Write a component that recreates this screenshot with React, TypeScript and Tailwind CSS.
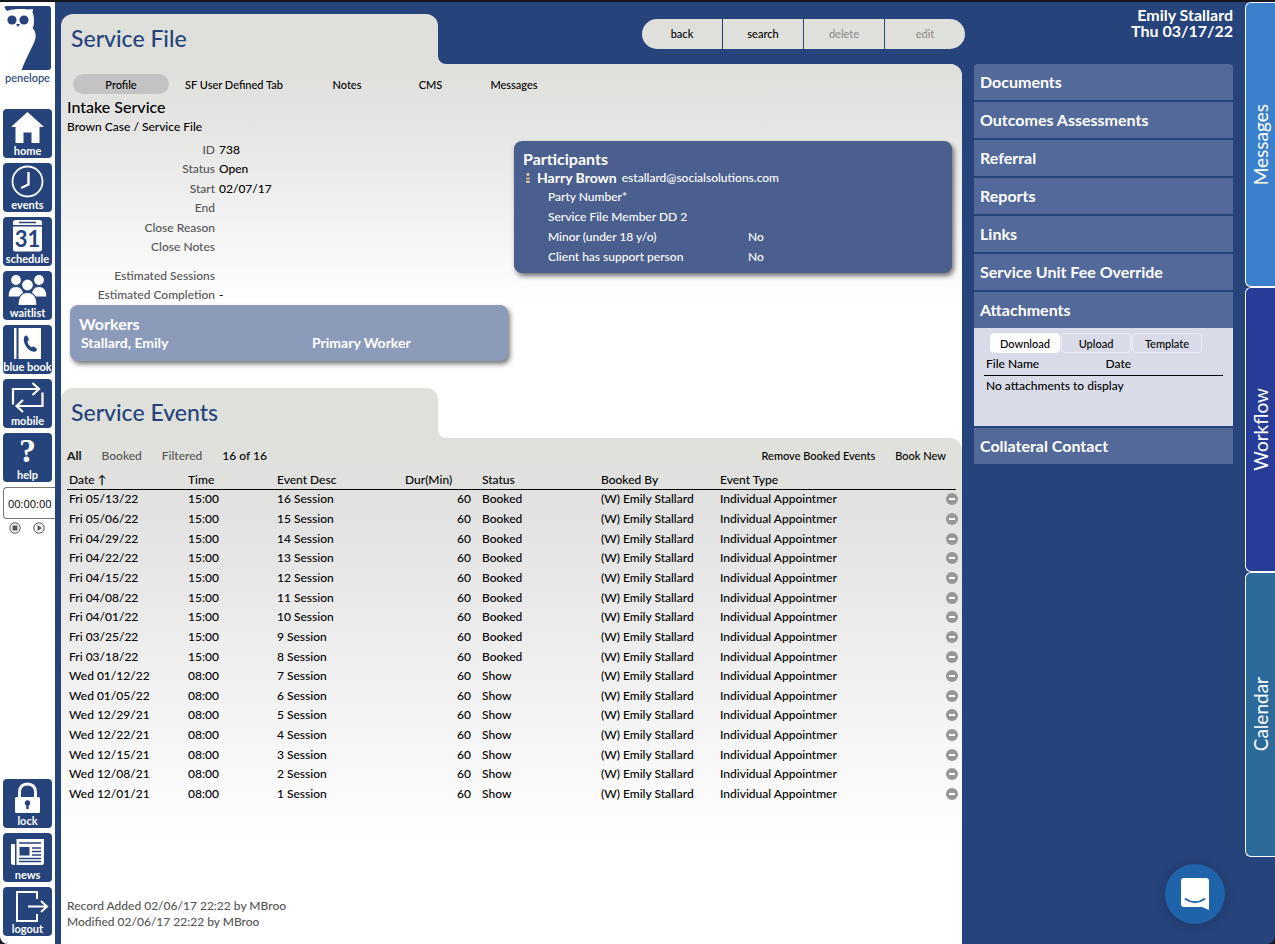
import { useState } from 'react';
import type { ReactNode } from 'react';

interface NavItem {
  label: string;
  icon: ReactNode;
}

const topNav: NavItem[] = [
  {
    label: 'home',
    icon: <path fill="currentColor" d="M24.5 3 40.5 17.500V18h-4v16h-8V23.500h-8V34h-8V18h-4v-.5z" />,
  },
  {
    label: 'events',
    icon: (
      <g fill="none" stroke="currentColor">
        <circle cx="24.5" cy="18.5" r="15" strokeWidth="1.8" />
        <path strokeWidth="2.4" d="M25.5 9v12.5L18 25" />
      </g>
    ),
  },
  {
    label: 'schedule',
    icon: (
      <g>
        <path fill="currentColor" d="M10 8V5.500Q10 3 12.500 3h24Q39 3 39 5.500V8z" />
        <path stroke="#26437b" strokeWidth="1.600" d="M16 5.500h17" />
        <path fill="currentColor" d="M10 9.500h29V32q0 2.500-2.500 2.500h-24Q10 34.500 10 32z" />
        <text x="24.500" y="30" textAnchor="middle" fontSize="22" fontWeight="700" fill="#26437b">
          31
        </text>
      </g>
    ),
  },
  {
    label: 'waitlist',
    icon: (
      <g fill="currentColor" stroke="#26437b" strokeWidth="1.2">
        <circle cx="13" cy="9" r="5.500" />
        <circle cx="36" cy="9" r="5.500" />
        <path d="M5 26c0-7 2.500-10.500 8-10.500S21 19 21 26zM28 26c0-7 2.500-10.500 8-10.500S44 19 44 26z" />
        <circle cx="24.500" cy="14" r="6" />
        <path d="M15 34.500C15 26 18 21.500 24.500 21.500S34 26 34 34.500z" />
      </g>
    ),
  },
  {
    label: 'blue book',
    icon: (
      <g>
        <path fill="currentColor" d="M11 3h2.500v31H11zM15.500 3H38v31H15.500z" />
        <path
          fill="#26437b"
          d="M21.500 11.500c1-1.400 2.300-1.400 3 0l1.200 2.600c.4 1-.2 1.700-1.300 2.600.5 2.300 2 4.300 4.200 5.600 1-.9 1.900-1.100 2.700-.5l2.200 1.700c1.100 1 .4 2.300-1 2.900-3 1-6.500-.9-9-4.400-2.500-3.600-3.500-8-2-10.500z"
        />
      </g>
    ),
  },
  {
    label: 'mobile',
    icon: (
      <g fill="none" stroke="currentColor" strokeWidth="2.2">
        <path d="M10 25.500V10h25M29.500 4l6.500 6-6.500 6" />
        <path d="M39.500 13.500V27h-25M20 21l-6.500 6 6.500 6" />
      </g>
    ),
  },
  {
    label: 'help',
    icon: (
      <text
        x="24.500"
        y="29"
        textAnchor="middle"
        fontSize="34"
        fontWeight="700"
        fill="currentColor"
        className="font-['Liberation_Serif',serif]"
      >
        ?
      </text>
    ),
  },
];

const bottomNav: NavItem[] = [
  {
    label: 'lock',
    icon: (
      <g>
        <path fill="none" stroke="currentColor" strokeWidth="3" d="M16.500 20v-7c0-5 3-8 8-8s8 3 8 8v7" />
        <rect x="12" y="18" width="25" height="16" rx="1.500" fill="currentColor" />
        <circle cx="24.500" cy="24" r="2.700" fill="#26437b" />
        <path fill="#26437b" d="M23.300 24h2.400v6h-2.400z" />
      </g>
    ),
  },
  {
    label: 'news',
    icon: (
      <g>
        <path fill="currentColor" d="M8 11h4v21H10.500Q8 32 8 29.500zM13.500 6H41v23.500q0 2.500-2.500 2.500h-25z" />
        <path fill="none" stroke="#26437b" strokeWidth="1.500" d="M16 10h22M29 15h9M29 18.500h9M29 22h9M16 25.500h22M16 28.500h22" />
        <path fill="#26437b" d="M16.500 14h10v8.500h-10z" />
      </g>
    ),
  },
  {
    label: 'logout',
    icon: (
      <g fill="none" stroke="currentColor" strokeWidth="2">
        <path d="M34 12V5H14v29h20v-7" />
        <path d="M25 19.500h18M38 14l6 5.500-6 5.500" />
      </g>
    ),
  },
];

const fileTabs = [
  { name: 'Profile', width: 'w-24' },
  { name: 'SF User Defined Tab', width: 'w-[130px]' },
  { name: 'Notes', width: 'w-24' },
  { name: 'CMS', width: 'w-[71px]' },
  { name: 'Messages', width: 'w-24' },
];

const details = [
  ['ID', '738'],
  ['Status', 'Open'],
  ['Start', '02/07/17'],
  ['End', ''],
  ['Close Reason', ''],
  ['Close Notes', ''],
];

const estimates = [
  ['Estimated Sessions', ''],
  ['Estimated Completion', '-'],
];

const participantFields = [
  ['Party Number*', ''],
  ['Service File Member DD 2', ''],
  ['Minor (under 18 y/o)', 'No'],
  ['Client has support person', 'No'],
];

const events = [
  { date: 'Fri 05/13/22', time: '15:00', status: 'Booked' },
  { date: 'Fri 05/06/22', time: '15:00', status: 'Booked' },
  { date: 'Fri 04/29/22', time: '15:00', status: 'Booked' },
  { date: 'Fri 04/22/22', time: '15:00', status: 'Booked' },
  { date: 'Fri 04/15/22', time: '15:00', status: 'Booked' },
  { date: 'Fri 04/08/22', time: '15:00', status: 'Booked' },
  { date: 'Fri 04/01/22', time: '15:00', status: 'Booked' },
  { date: 'Fri 03/25/22', time: '15:00', status: 'Booked' },
  { date: 'Fri 03/18/22', time: '15:00', status: 'Booked' },
  { date: 'Wed 01/12/22', time: '08:00', status: 'Show' },
  { date: 'Wed 01/05/22', time: '08:00', status: 'Show' },
  { date: 'Wed 12/29/21', time: '08:00', status: 'Show' },
  { date: 'Wed 12/22/21', time: '08:00', status: 'Show' },
  { date: 'Wed 12/15/21', time: '08:00', status: 'Show' },
  { date: 'Wed 12/08/21', time: '08:00', status: 'Show' },
  { date: 'Wed 12/01/21', time: '08:00', status: 'Show' },
];

const sections = [
  'Documents',
  'Outcomes Assessments',
  'Referral',
  'Reports',
  'Links',
  'Service Unit Fee Override',
  'Attachments',
  'Collateral Contact',
];

const drawers = [
  { name: 'Messages', color: 'bg-[#3a80cc]' },
  { name: 'Workflow', color: 'bg-[#273c98]' },
  { name: 'Calendar', color: 'bg-[#2c6a9c]' },
];

function NavButton({ label, icon }: NavItem) {
  return (
    <button
      type="button"
      className="flex h-[49px] w-[49px] flex-col items-center rounded bg-[#26437b] text-white"
    >
      <svg viewBox="0 0 49 36" className="h-9 w-full shrink-0">
        {icon}
      </svg>
      <span className="text-[11px] leading-3 font-bold whitespace-nowrap">{label}</span>
    </button>
  );
}

function Logo() {
  return (
    <div className="flex flex-col items-center text-[#26437b]">
      <svg viewBox="0 0 47 64" className="h-16 w-[47px]">
        <rect width="47" height="64" rx="3" fill="#26437b" />
        <path
          fill="#fff"
          d="M0 1 3 5C8 3 18 2.500 24 3.500L29 3l-.5 3.500c1.500 2.500 1.500 6.500 1.500 9 0 3-.5 5-1.500 6.500 3 3 4 7 2.500 12C29 40 23 50 17.500 64H0z"
        />
        <circle cx="8" cy="14" r="4.600" fill="#26437b" />
        <circle cx="20" cy="14" r="4.600" fill="#26437b" />
        <path fill="#26437b" d="M12 18h4l-2 3z" />
      </svg>
      <span className="text-[11px] leading-4 font-medium">penelope</span>
    </div>
  );
}

function SectionTab({ title }: { title: string }) {
  return (
    <div className="relative h-[50px] w-[377px] rounded-t-xl bg-[#dfe0db] pt-2 pl-[10px]">
      <h1 className="text-[23px] leading-8 font-medium text-[#26437b]">{title}</h1>
      {/* fillet between the tab and the panel below it */}
      <svg viewBox="0 0 8 8" className="absolute bottom-0 left-full size-2">
        <path fill="#dfe0db" d="M0 0v8h8A8 8 0 0 1 0 0z" />
      </svg>
    </div>
  );
}

function DetailList({ rows, className }: { rows: string[][]; className: string }) {
  return (
    <dl className={className}>
      {rows.map(([label, value]) => (
        <div key={label} className="flex items-center gap-1">
          <dt className="w-[145px] text-right text-[#555]">{label}</dt>
          <dd>{value}</dd>
        </div>
      ))}
    </dl>
  );
}

function Attachments() {
  const [tab, setTab] = useState('Download');

  return (
    <div className="h-[98px] bg-[#d9dce8] px-[10px] pt-[5px] font-medium text-black">
      <div className="flex gap-px pl-[6px]">
        {['Download', 'Upload', 'Template'].map((name) => (
          <button
            key={name}
            type="button"
            onClick={() => setTab(name)}
            className={`h-5 w-[70px] rounded-sm border pt-0.5 text-[11px] leading-4 ${
              tab === name ? 'border-white bg-white' : 'border-[#eceef5]'
            }`}
          >
            {name}
          </button>
        ))}
      </div>
      <table className="w-full text-left">
        <thead>
          <tr className="h-[22px] border-b border-black">
            <th className="w-1/2 pl-[2px] font-medium">File Name</th>
            <th className="pl-[2px] font-medium">Date</th>
          </tr>
        </thead>
        <tbody>
          <tr className="h-[22px]">
            <td colSpan={2} className="pl-[2px]">
              No attachments to display
            </td>
          </tr>
        </tbody>
      </table>
    </div>
  );
}

function EventsTable() {
  return (
    <table className="h-[333px] w-full table-fixed text-left">
      <thead>
        <tr className="h-[18px] border-b border-black">
          <th className="w-[119px] pl-[2px] font-medium">Date ↑</th>
          <th className="w-[89px] pl-[2px] font-medium">Time</th>
          <th className="w-[128px] pl-[2px] font-medium">Event Desc</th>
          <th className="w-[77px] pl-[2px] font-medium">Dur(Min)</th>
          <th className="w-[119px] pl-[2px] font-medium">Status</th>
          <th className="w-[119px] pl-[2px] font-medium">Booked By</th>
          <th className="pl-[2px] font-medium">Event Type</th>
          <th className="w-5" aria-label="Remove" />
        </tr>
      </thead>
      <tbody>
        {events.map((event, i) => (
          <tr key={event.date}>
            <td className="pl-[2px]">{event.date}</td>
            <td className="pl-[2px]">{event.time}</td>
            <td className="pl-[2px]">{events.length - i} Session</td>
            <td className="pr-[9px] text-right">60</td>
            <td className="pl-[2px]">{event.status}</td>
            <td className="pl-[2px]">(W) Emily Stallard</td>
            <td className="pl-[2px]">Individual Appointmer</td>
            <td>
              <button
                type="button"
                aria-label={`Remove ${event.date}`}
                className="ml-[10px] flex size-3 items-center justify-center rounded-full bg-[#979797]"
              >
                <span className="h-0.5 w-1.5 bg-white" />
              </button>
            </td>
          </tr>
        ))}
      </tbody>
    </table>
  );
}

export default function App() {
  const [activeTab, setActiveTab] = useState('Profile');
  const [timer, setTimer] = useState('00:00:00');

  return (
    <div className="min-h-screen bg-[#17171f] pt-0.5 font-['Lato','Liberation_Sans',sans-serif] text-xs leading-4 font-medium text-black">
      <div className="flex min-h-[calc(100vh-2px)] overflow-hidden rounded-b-lg bg-[#26437b]">
        <nav className="flex w-[55px] shrink-0 flex-col bg-white pt-1 pb-2 pl-[3px]">
          <div className="w-[49px]">
            <Logo />
          </div>
          <div className="mt-[23px] flex flex-col gap-[5px]">
            {topNav.map((item) => (
              <NavButton key={item.label} {...item} />
            ))}
          </div>
          <input
            aria-label="Timer"
            value={timer}
            onChange={(e) => setTimer(e.target.value)}
            className="mt-[5px] h-8 w-full rounded-l-sm border border-r-0 border-[#777] bg-white pl-1 font-['Open_Sans','Liberation_Sans',sans-serif] text-[11px] font-normal"
          />
          <div className="mt-[3px] flex gap-3 pl-[6px] text-[#555]">
            <button type="button" aria-label="Stop timer">
              <svg viewBox="0 0 12 12" className="size-3">
                <circle cx="6" cy="6" r="5.200" fill="none" stroke="currentColor" />
                <rect x="3.500" y="3.500" width="5" height="5" fill="currentColor" />
              </svg>
            </button>
            <button type="button" aria-label="Start timer">
              <svg viewBox="0 0 12 12" className="size-3">
                <circle cx="6" cy="6" r="5.200" fill="none" stroke="currentColor" />
                <path fill="currentColor" d="M4.500 3 9 6 4.500 9z" />
              </svg>
            </button>
          </div>
          <div className="mt-auto flex flex-col gap-[5px]">
            {bottomNav.map((item) => (
              <NavButton key={item.label} {...item} />
            ))}
          </div>
        </nav>

        <main className="ml-[6px] flex min-w-0 flex-1 flex-col pt-3">
          <header className="flex items-center justify-between">
            <SectionTab title="Service File" />
            <div className="-mr-[3px] mb-[10px] flex gap-px overflow-hidden rounded-full text-[11px]">
              {['back', 'search', 'delete', 'edit'].map((action) => (
                <button
                  key={action}
                  type="button"
                  disabled={action === 'delete' || action === 'edit'}
                  className="h-[30px] w-20 bg-[#dfe0db] disabled:text-[#8f8f8f]"
                >
                  {action}
                </button>
              ))}
            </div>
          </header>

          <div className="flex flex-1 flex-col rounded-tr-xl bg-white">
            <section className="rounded-tr-xl bg-linear-to-b from-[#dfe0db] via-[#e5e5e4] via-20% to-white to-75% pb-[27px]">
              <div className="flex pt-[10px] pl-3 text-[11px]">
                {fileTabs.map(({ name, width }) => (
                  <button
                    key={name}
                    type="button"
                    onClick={() => setActiveTab(name)}
                    className={`h-5 rounded-full pt-px ${width} ${activeTab === name ? 'bg-[#c3c3c3]' : ''}`}
                  >
                    {name}
                  </button>
                ))}
              </div>
              <h2 className="mt-[3px] pl-[6px] text-base leading-5">Intake Service</h2>
              <p className="pt-px pl-[6px] leading-[18px]">Brown Case / Service File</p>

              <div className="mt-1 grid grid-cols-2 items-start gap-[6px] pr-[10px] pl-[9px]">
                <div>
                  <DetailList rows={details} className="grid h-[117px] grid-rows-6" />
                  <DetailList rows={estimates} className="mt-[9px] grid h-[39px] grid-rows-2" />
                  <div className="rounded-lg bg-[#8d9bbb] px-[9px] pt-[9px] pb-[9px] font-bold text-white shadow-[2px_3px_5px_rgba(0,0,0,0.55)]">
                    <h3 className="text-base leading-5">Workers</h3>
                    <div className="grid grid-cols-[231px_1fr] pl-[2px] text-sm leading-[18px]">
                      <span>Stallard, Emily</span>
                      <span>Primary Worker</span>
                    </div>
                  </div>
                </div>

                <div className="mt-px rounded-lg bg-[#4a5f8e] px-[9px] pt-2 pb-[6px] text-white shadow-[2px_3px_5px_rgba(0,0,0,0.55)]">
                  <h3 className="text-base leading-5 font-bold">Participants</h3>
                  <div className="flex items-center leading-[18px]">
                    <svg viewBox="0 0 6 12" className="ml-[2px] h-3 w-1.5">
                      <circle cx="3" cy="2.500" r="1.800" fill="#d8d8c8" stroke="#555" strokeWidth=".5" />
                      <path fill="#e6e2c4" stroke="#555" strokeWidth=".5" d="M1 5.500h4v2H1zM1 8.500h4v2.500H1z" />
                    </svg>
                    <span className="ml-[6px] text-sm leading-[18px] font-bold">Harry Brown</span>
                    <span className="ml-[5px]">estallard@socialsolutions.com</span>
                  </div>
                  <dl className="grid h-20 grid-rows-4 pl-[25px]">
                    {participantFields.map(([label, value]) => (
                      <div key={label} className="flex items-center">
                        <dt className="w-[200px]">{label}</dt>
                        <dd>{value}</dd>
                      </div>
                    ))}
                  </dl>
                </div>
              </div>
            </section>

            <SectionTab title="Service Events" />
            <section className="flex flex-1 flex-col rounded-tr-xl bg-linear-to-b from-[#dfe0db] via-[#e2e2e2] via-15% to-white to-80% pt-[10px] pr-[6px] pb-[14px] pl-[6px]">
              <div className="flex items-center text-[#555]">
                <button type="button" className="font-black text-[#222]">
                  All
                </button>
                <button type="button" className="ml-5">
                  Booked
                </button>
                <button type="button" className="ml-5">
                  Filtered
                </button>
                <span className="ml-5 text-black">16 of 16</span>
                <button type="button" className="mr-5 ml-auto text-[11px] text-black">
                  Remove Booked Events
                </button>
                <button type="button" className="mr-[10px] text-[11px] text-black">
                  Book New
                </button>
              </div>
              <div className="mt-[7px]">
                <EventsTable />
              </div>
              <footer className="mt-auto text-[#555]">
                <p>Record Added 02/06/17 22:22 by MBroo</p>
                <p>Modified 02/06/17 22:22 by MBroo</p>
              </footer>
            </section>
          </div>
        </main>

        <aside className="mx-3 w-[259px] shrink-0 pt-[5px] text-white">
          <div className="h-[57px] text-right text-base leading-4 font-bold">
            <p>Emily Stallard</p>
            <p>Thu 03/17/22</p>
          </div>
          <div className="flex flex-col gap-0.5 overflow-hidden rounded-t">
            {sections.map((name) => (
              <div key={name}>
                <button
                  type="button"
                  className="h-9 w-full bg-[#53699a] pl-[6px] text-left text-base font-bold"
                >
                  {name}
                </button>
                {name === 'Attachments' && <Attachments />}
              </div>
            ))}
          </div>
        </aside>

        <div className="mb-[87px] flex w-[30px] shrink-0 flex-col">
          {drawers.map(({ name, color }) => (
            <button
              key={name}
              type="button"
              className={`flex flex-1 items-center justify-center rounded-l-md border border-r-0 border-white text-[19px] font-normal text-white ${color}`}
            >
              <span className="rotate-180 [writing-mode:vertical-rl]">{name}</span>
            </button>
          ))}
        </div>
      </div>

      <button
        type="button"
        aria-label="Open chat"
        className="fixed right-[50px] bottom-5 flex size-[60px] items-center justify-center rounded-full bg-[#1f64ab] shadow-[0_1px_12px_rgba(0,0,0,0.2)]"
      >
        <svg viewBox="0 0 28 32" className="h-8 w-7">
          <path fill="#fff" d="M3 0h22q3 0 3 3v29l-7-3H3q-3 0-3-3V3q0-3 3-3z" />
          <path fill="none" stroke="#1f64ab" strokeWidth="1.800" strokeLinecap="round" d="M4.500 21q9.500 6.500 19 0" />
        </svg>
      </button>
    </div>
  );
}
